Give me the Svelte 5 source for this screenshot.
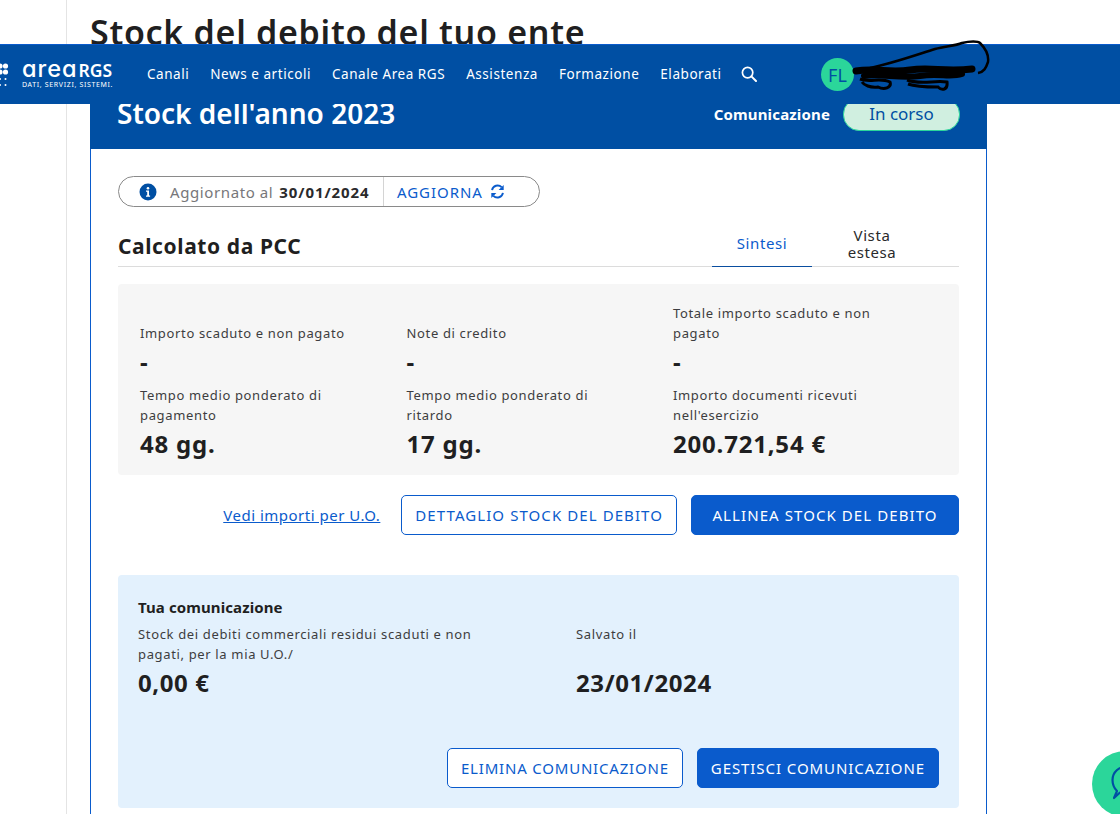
<script>
  const navItems = ['Canali', 'News e articoli', 'Canale Area RGS', 'Assistenza', 'Formazione', 'Elaborati'];

  const stats = [
    { label: 'Importo scaduto e non pagato', value: '-' },
    { label: 'Note di credito', value: '-' },
    { label: 'Totale importo scaduto e non pagato', value: '-' },
    { label: 'Tempo medio ponderato di pagamento', value: '48 gg.' },
    { label: 'Tempo medio ponderato di ritardo', value: '17 gg.' },
    { label: "Importo documenti ricevuti nell'esercizio", value: '200.721,54 €' },
  ];
</script>

<div class="page">
  <aside class="rail"></aside>
  <main class="content">
    <h1>Stock del debito del tuo ente</h1>

    <section class="card">
      <div class="card-head">
        <h2>Stock dell'anno 2023</h2>
        <div class="status">
          <span class="status-label">Comunicazione</span>
          <span class="status-pill">In corso</span>
        </div>
      </div>

      <div class="card-body">
        <div class="update">
          <div class="update-info">
            <svg class="info" viewBox="0 0 18 18" aria-hidden="true">
              <circle cx="9" cy="9" r="8.5" fill="#004fa3" />
              <circle cx="9" cy="5.2" r="1.3" fill="#fff" />
              <path d="M7 7.6h3v5h1.1v1.2H7v-1.2h1.2V8.8H7z" fill="#fff" />
            </svg>
            <span class="update-text">Aggiornato al</span>
            <strong>30/01/2024</strong>
          </div>
          <div class="update-action">
            AGGIORNA
            <svg class="refresh" viewBox="0 0 16 16" aria-hidden="true">
              <path d="M2.2 6.6A6 6 0 0 1 12.4 3.4" fill="none" stroke="#0a5bcc" stroke-width="2" />
              <path d="M14.6 1v5.4H9.2z" fill="#0a5bcc" />
              <path d="M13.8 9.4A6 6 0 0 1 3.6 12.6" fill="none" stroke="#0a5bcc" stroke-width="2" />
              <path d="M1.4 15V9.6h5.4z" fill="#0a5bcc" />
            </svg>
          </div>
        </div>

        <div class="section-head">
          <h3>Calcolato da PCC</h3>
          <div class="tabs">
            <span class="tab active">Sintesi</span>
            <span class="tab second">Vista estesa</span>
          </div>
        </div>

        <div class="stats">
          {#each stats as stat}
            <div class="stat">
              <span class="stat-label">{stat.label}</span>
              <span class="stat-value">{stat.value}</span>
            </div>
          {/each}
        </div>

        <div class="actions">
          <a class="link" href="#top">Vedi importi per U.O.</a>
          <button class="btn outline">DETTAGLIO STOCK DEL DEBITO</button>
          <button class="btn solid wide">ALLINEA STOCK DEL DEBITO</button>
        </div>

        <div class="notice">
          <h4>Tua comunicazione</h4>
          <div class="notice-grid">
            <div class="notice-col">
              <span class="stat-label">Stock dei debiti commerciali residui scaduti e non pagati, per la mia U.O./</span>
              <span class="notice-value">0,00 €</span>
            </div>
            <div class="notice-col">
              <span class="stat-label">Salvato il</span>
              <span class="notice-value">23/01/2024</span>
            </div>
          </div>
          <div class="notice-actions">
            <button class="btn outline small">ELIMINA COMUNICAZIONE</button>
            <button class="btn solid small">GESTISCI COMUNICAZIONE</button>
          </div>
        </div>
      </div>
    </section>
  </main>

  <header class="topbar">
    <div class="logo">
      <svg class="logo-dots" viewBox="0 0 10 26" aria-hidden="true">
        <circle cx="0" cy="4" r="2.600" fill="#fff" />
        <circle cx="5.500" cy="4" r="2.600" fill="#fff" />
        <circle cx="0" cy="10" r="2.600" fill="#fff" />
        <circle cx="5.500" cy="10" r="2.600" fill="#fff" />
        <circle cx="0" cy="17" r="1" fill="#fff" />
        <circle cx="5.500" cy="17" r="1" fill="#fff" />
        <circle cx="0" cy="23" r="1" fill="#fff" />
        <circle cx="5.500" cy="23" r="1" fill="#fff" />
      </svg>
      <div class="logo-text">
        <span class="logo-name"><span class="logo-thin">area</span><span class="logo-bold">RGS</span></span>
        <span class="logo-sub">DATI, SERVIZI, SISTEMI.</span>
      </div>
    </div>
    <nav class="nav">
      {#each navItems as item}
        <span>{item}</span>
      {/each}
      <svg class="search" viewBox="0 0 16 16" aria-hidden="true">
        <circle cx="6.600" cy="6.600" r="5.200" fill="none" stroke="#fff" stroke-width="1.700" />
        <path d="M10.400 10.400 15 15" stroke="#fff" stroke-width="2" stroke-linecap="round" />
      </svg>
    </nav>
    <div class="avatar">FL</div>
  </header>

  <!-- scarabocchio sopra il nome utente -->
  <svg class="scribble" viewBox="0 0 140 52" aria-hidden="true">
    <path d="M20 28C40 24 60 17 85 9 95 6 105 6 112 3 120 1 128 1 130 3 136 9 139 15 138 22 136 28 134 32 128 33" fill="none" stroke="#000" stroke-width="2.500" />
    <path d="M6 31C25 28 40 33 60 30S95 32 122 29" fill="none" stroke="#000" stroke-width="7" stroke-linecap="round" />
    <path d="M14 36C30 33 50 39 70 36S100 38 112 34" fill="none" stroke="#000" stroke-width="6" stroke-linecap="round" />
    <path d="M10 39C20 43 30 37 40 42 42 48 34 50 28 47 20 48 14 45 12 42M57 40C70 45 85 40 97 42 98 50 92 51 88 47 78 47 66 47 58 44" fill="none" stroke="#000" stroke-width="3" />
  </svg>

  <div class="chat">
    <svg viewBox="0 0 40 40" aria-hidden="true">
      <path d="M8 33 11 26C8 23 6.500 19 6.500 15 6.500 7 13 1.500 21 1.500S36 7 36 15 29 29 21 29C18 29 16 28.500 14 27.500Z" fill="none" stroke="#004fa3" stroke-width="2.200" stroke-linejoin="round" />
    </svg>
  </div>
</div>

<style>
  :global(body) {
    margin: 0;
    overflow: hidden;
    background: #fff;
  }
  .page {
    display: flex;
    height: 814px;
    overflow: hidden;
    font-family: "Noto Sans", "Open Sans", sans-serif;
    color: #1c1c1e;
  }
  .rail {
    width: 66px;
    flex-shrink: 0;
    border-right: 1px solid #e4e4e4;
  }
  .content {
    width: 897px;
    margin-left: 23px;
  }
  h1 {
    margin: 10px 0 0;
    font-size: 34px;
    line-height: 44px;
    font-weight: 600;
    color: #1f1f21;
    letter-spacing: 0.7px;
  }
  .card {
    margin-top: 11px;
  }
  .card-head {
    height: 84px;
    padding: 0 27px;
    display: flex;
    align-items: flex-end;
    justify-content: space-between;
    background: #004fa3;
    color: #fff;
    box-sizing: border-box;
  }
  h2 {
    margin: 0 0 16px;
    font-size: 28px;
    line-height: 40px;
    font-weight: 600;
  }
  .status {
    display: flex;
    align-items: center;
    gap: 13px;
    margin-bottom: 18px;
  }
  .status-label {
    font-size: 15px;
    font-weight: 700;
    letter-spacing: 0.15px;
    margin-bottom: 2px;
  }
  .status-pill {
    width: 117px;
    height: 33px;
    box-sizing: border-box;
    display: flex;
    align-items: center;
    justify-content: center;
    padding-bottom: 2px;
    background: #d0efe0;
    border: 1px solid #2bd69a;
    border-radius: 16px;
    color: #004fa3;
    font-size: 17px;
  }
  .card-body {
    height: 700px;
    padding: 27px 27px 0;
    border: 1px solid #0a5bcc;
    border-top: 0;
    box-sizing: border-box;
  }
  .update {
    display: inline-flex;
    height: 31px;
    box-sizing: border-box;
    width: 422px;
    border: 1px solid #8a8a8a;
    border-radius: 16px;
    font-size: 15px;
    letter-spacing: 0.6px;
    vertical-align: top;
  }
  .update-info {
    width: 265px;
    display: flex;
    align-items: center;
    padding-left: 20px;
    box-sizing: border-box;
    border-right: 1px solid #d4d4d4;
    white-space: nowrap;
  }
  .info {
    width: 18px;
    height: 18px;
    margin-right: 13px;
  }
  .update-text {
    color: #77777a;
    margin-right: 6px;
  }
  .update-info strong {
    font-weight: 700;
    color: #2a2a2c;
    letter-spacing: 0.9px;
  }
  .update-action {
    display: flex;
    align-items: center;
    gap: 7px;
    padding-left: 13px;
    color: #0a5bcc;
    letter-spacing: 0.95px;
  }
  .refresh {
    width: 15px;
    height: 15px;
  }
  .section-head {
    display: flex;
    justify-content: space-between;
    align-items: center;
    margin-top: 16px;
    height: 43px;
    border-bottom: 1px solid #dcdcdc;
  }
  h3 {
    margin: 2px 0 0;
    font-size: 21px;
    font-weight: 700;
    color: #1f1f21;
    letter-spacing: 0.6px;
  }
  .tabs {
    display: flex;
    height: 100%;
    margin-right: 27px;
  }
  .tab {
    width: 100px;
    box-sizing: border-box;
    display: flex;
    align-items: center;
    justify-content: center;
    text-align: center;
    padding-bottom: 2px;
    font-size: 15px;
    line-height: 17px;
    color: #2a2a2c;
    letter-spacing: 0.6px;
  }
  .tab.second {
    width: 120px;
    padding: 0 30px 2px;
  }
  .tab.active {
    color: #0a5bcc;
    border-bottom: 1px solid #0a4ea0;
    margin-bottom: -1px;
  }
  .stats {
    margin-top: 17px;
    height: 191px;
    box-sizing: border-box;
    padding: 19px 22px 12px;
    background: #f6f6f6;
    border-radius: 4px;
    display: grid;
    grid-template-columns: repeat(3, 266.5px);
    row-gap: 4px;
  }
  .stat {
    display: flex;
    flex-direction: column;
    justify-content: flex-end;
  }
  .stat-label {
    font-size: 13px;
    line-height: 20px;
    color: #3d3d40;
    letter-spacing: 0.65px;
    max-width: 225px;
  }
  .stat-value {
    font-size: 24px;
    line-height: 38px;
    font-weight: 700;
    color: #1f1f21;
    letter-spacing: 0.8px;
  }
  .actions {
    display: flex;
    justify-content: flex-end;
    align-items: center;
    gap: 14px;
    margin-top: 20px;
  }
  .link {
    margin-right: 7px;
    font-size: 15px;
    color: #0a5bcc;
    letter-spacing: 0.5px;
  }
  .btn {
    height: 40px;
    padding: 0 13px;
    box-sizing: border-box;
    border-radius: 5px;
    font-family: inherit;
    font-size: 15px;
    letter-spacing: 1.08px;
    border: 1px solid #0a5bcc;
  }
  .btn.small {
    letter-spacing: 0.93px;
  }
  .btn.outline.small {
    letter-spacing: 0.8px;
  }
  .btn.outline {
    background: #fff;
    color: #0a5bcc;
  }
  .btn.solid {
    background: #0a5bcc;
    color: #fff;
  }
  .btn.wide {
    width: 268px;
  }
  .notice {
    margin-top: 40px;
    height: 233px;
    box-sizing: border-box;
    padding: 22px 20px 20px;
    background: #e3f1fd;
    border-radius: 4px;
    display: flex;
    flex-direction: column;
  }
  h4 {
    margin: 0;
    font-size: 15px;
    line-height: 20px;
    font-weight: 700;
    color: #1f1f21;
    letter-spacing: 0.1px;
  }
  .notice-grid {
    display: grid;
    grid-template-columns: 438px 1fr;
    margin-top: 7px;
  }
  .notice-col {
    display: flex;
    flex-direction: column;
    justify-content: space-between;
  }
  .notice-col .stat-label {
    max-width: 350px;
  }
  .notice-value {
    margin-top: 2px;
    font-size: 24px;
    line-height: 34px;
    font-weight: 700;
    color: #1f1f21;
    letter-spacing: 0.6px;
  }
  .notice-actions {
    display: flex;
    justify-content: flex-end;
    gap: 14px;
    margin-top: auto;
  }
  .topbar {
    position: absolute;
    top: 44px;
    left: 0;
    width: 1120px;
    height: 60px;
    box-sizing: border-box;
    border-top: 1px solid #0a5bcc;
    background: #004fa3;
    color: #fff;
    display: flex;
    align-items: center;
  }
  .logo {
    width: 147px;
    flex-shrink: 0;
    display: flex;
    align-items: center;
  }
  .logo-dots {
    width: 10px;
    height: 26px;
    margin-right: 12px;
  }
  .logo-text {
    display: flex;
    flex-direction: column;
    margin-bottom: 1px;
  }
  .logo-name {
    display: flex;
    align-items: baseline;
    height: 20px;
    white-space: nowrap;
  }
  .logo-thin {
    display: block;
    line-height: 20px;
    font-family: "Inter", sans-serif;
    font-feature-settings: "cv11";
    font-weight: 500;
    font-size: 23.500px;
    letter-spacing: 1px;
    margin-right: 1px;
  }
  .logo-bold {
    display: block;
    line-height: 20px;
    font-size: 17.500px;
    font-weight: 600;
  }
  .logo-sub {
    margin-top: 1px;
    font-size: 7px;
    line-height: 10px;
    letter-spacing: 0.65px;
    white-space: nowrap;
  }
  .nav {
    display: flex;
    align-items: center;
    gap: 21px;
    font-size: 13.5px;
    letter-spacing: 0.55px;
    white-space: nowrap;
    margin-bottom: 1px;
  }
  .search {
    width: 16px;
    height: 16px;
    margin-left: -2px;
  }
  .avatar {
    position: absolute;
    left: 821px;
    top: 13px;
    width: 33px;
    height: 33px;
    border-radius: 50%;
    background: #2bd69a;
    color: #004fa3;
    display: flex;
    align-items: center;
    justify-content: center;
    font-size: 18px;
  }
  .scribble {
    position: absolute;
    left: 850px;
    top: 40px;
    width: 140px;
    height: 52px;
  }
  .chat {
    position: absolute;
    left: 1092px;
    top: 751px;
    width: 66px;
    height: 66px;
    border-radius: 50%;
    background: #2bd69a;
  }
  .chat svg {
    position: absolute;
    left: 14px;
    top: 14px;
    width: 40px;
    height: 40px;
  }
</style>
